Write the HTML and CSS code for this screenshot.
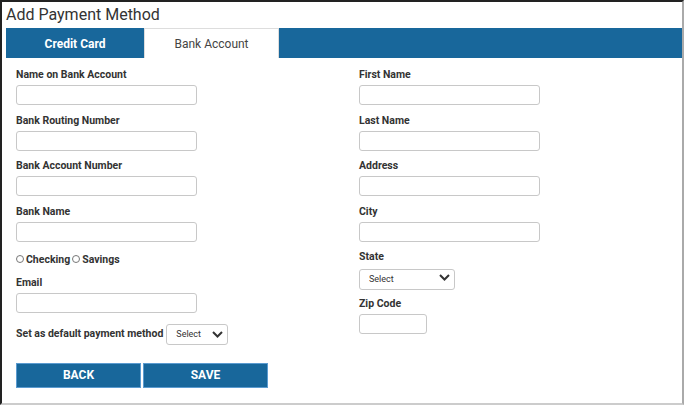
FILE: index.html
```html
<!DOCTYPE html>
<html lang="en">
<head>
    <meta charset="UTF-8">
    <meta name="viewport" content="width=device-width, initial-scale=1.0">
    <title>Add Payment Method</title>
    <link rel="stylesheet" href="styles.css">
</head>
<body>
<div class="page">
    <h1 class="title">Add Payment Method</h1>

    <!-- Tabs -->
    <div class="tabs">
        <div class="tab active-blue">Credit Card</div>
        <div class="tab current">Bank Account</div>
    </div>

    <form class="form">
        <div class="col">
            <div class="field">
                <label for="nameBank">Name on Bank Account</label>
                <input type="text" id="nameBank" class="input">
            </div>
            <div class="field">
                <label for="routing">Bank Routing Number</label>
                <input type="text" id="routing" class="input">
            </div>
            <div class="field">
                <label for="accNumber">Bank Account Number</label>
                <input type="text" id="accNumber" class="input">
            </div>
            <div class="field">
                <label for="bankName">Bank Name</label>
                <input type="text" id="bankName" class="input">
            </div>
            <div class="radios">
                <span class="radio"></span><span>Checking</span>
                <span class="radio"></span><span>Savings</span>
            </div>
            <div class="field">
                <label for="email">Email</label>
                <input type="email" id="email" class="input">
            </div>
            <div class="default-row">
                <span>Set as default payment method</span>
                <div class="select-wrap small">
                    <select class="select"><option>Select</option></select>
                    <svg class="chev" width="11" height="7" viewBox="0 0 11 7"><path d="M1 1 L5.5 5.5 L10 1" fill="none" stroke="#333" stroke-width="2"/></svg>
                </div>
            </div>
            <div class="buttons">
                <button type="button" class="btn">BACK</button>
                <button type="button" class="btn">SAVE</button>
            </div>
        </div>

        <div class="col">
            <div class="field">
                <label for="first">First Name</label>
                <input type="text" id="first" class="input">
            </div>
            <div class="field">
                <label for="last">Last Name</label>
                <input type="text" id="last" class="input">
            </div>
            <div class="field">
                <label for="address">Address</label>
                <input type="text" id="address" class="input">
            </div>
            <div class="field">
                <label for="city">City</label>
                <input type="text" id="city" class="input">
            </div>
            <div class="field">
                <label>State</label>
                <div class="select-wrap state">
                    <select class="select"><option>Select</option></select>
                    <svg class="chev" width="11" height="7" viewBox="0 0 11 7"><path d="M1 1 L5.5 5.5 L10 1" fill="none" stroke="#333" stroke-width="2"/></svg>
                </div>
            </div>
            <div class="field">
                <label for="zip">Zip Code</label>
                <input type="text" id="zip" class="input zip">
            </div>
        </div>
    </form>
</div>
</body>
</html>
```

FILE: styles.css
```css
body {
    margin: 0;
    font-family: Roboto, "Liberation Sans", Arial, sans-serif;
    color: #333;
    background: #fff;
}

.page {
    box-sizing: border-box;
    width: 684px;
    height: 405px;
    border-top: 2px solid #222;
    border-left: 2px solid #222;
    border-right: 2px solid #aaa;
    border-bottom: 2px solid #ccc;
    padding-left: 4px;
}

.title {
    margin: 0;
    font-size: 16px;
    font-weight: normal;
    line-height: 26px;
    color: #333;
}

/* Tabs */
.tabs {
    display: flex;
    height: 30px;
    background-color: #18679b;
}

.tab {
    display: flex;
    align-items: center;
    justify-content: center;
    font-size: 12px;
    padding-top: 1px;
}

.active-blue {
    width: 138px;
    color: white;
    font-weight: bold;
}

.current {
    box-sizing: border-box;
    width: 135px;
    background: white;
    color: #444;
    border: 1px solid #ddd;
    border-bottom: none;
}

/* Form */
.form {
    display: grid;
    grid-template-columns: 343px auto;
    padding: 10px 0 0 10px;
}

.field {
    margin-bottom: 8.5px;
}

label,
.radios,
.default-row {
    font-size: 10.5px;
    font-weight: bold;
    line-height: 14px;
    color: #333;
}

label {
    display: block;
    margin-bottom: 3px;
}

.input {
    box-sizing: border-box;
    display: block;
    width: 181px;
    height: 20px;
    border: 1px solid #c8c8c8;
    border-radius: 3px;
    padding: 2px 5px;
    margin: 0;
}

.zip {
    width: 68px;
}

.radios {
    display: flex;
    align-items: center;
    padding-top: 3px;
    margin-bottom: 9px;
}

.radio {
    box-sizing: border-box;
    width: 8px;
    height: 8px;
    border: 1px solid #777;
    border-radius: 50%;
    margin-right: 2px;
    margin-top: -2px;
}

.radios span + .radio {
    margin-left: 2px;
}

.default-row {
    display: flex;
    align-items: center;
    gap: 3px;
    padding-top: 2px;
}

.select-wrap {
    position: relative;
    height: 21px;
}

.select-wrap.small {
    width: 62px;
}

.select-wrap.state {
    width: 96px;
}

.select {
    box-sizing: border-box;
    appearance: none;
    -webkit-appearance: none;
    width: 100%;
    height: 21px;
    border: 1px solid #c8c8c8;
    border-radius: 3px;
    background: white;
    font-family: inherit;
    font-size: 9px;
    font-weight: normal;
    color: #333;
    padding: 0 0 0 9px;
    margin: 0;
}

.chev {
    position: absolute;
    right: 5px;
    top: 7px;
    pointer-events: none;
}

.buttons {
    display: flex;
    gap: 2px;
    margin-top: 18px;
}

.btn {
    width: 125px;
    height: 25px;
    background-color: #18679b;
    border: 1px solid #5b9bd0;
    color: white;
    font-family: inherit;
    font-size: 12px;
    font-weight: bold;
    cursor: pointer;
}

.btn:hover {
    background-color: #12557f;
}
```
